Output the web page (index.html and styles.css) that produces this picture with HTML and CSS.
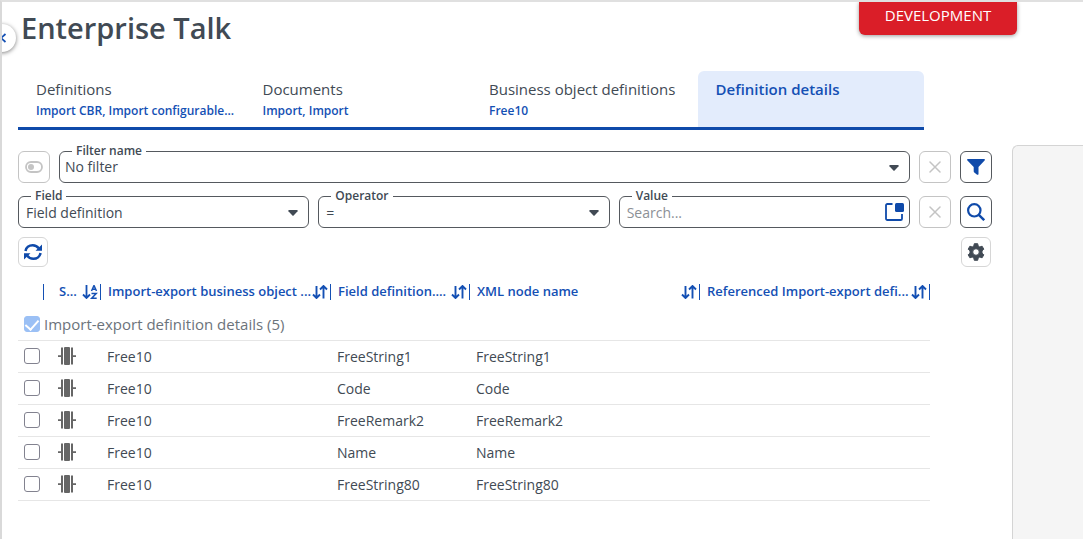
FILE: index.html
```html
<!DOCTYPE html>
<html lang="en">
<head>
  <meta charset="UTF-8" />
  <meta name="viewport" content="width=device-width, initial-scale=1.0"/>
  <title>Enterprise Talk</title>
  <link rel="stylesheet" href="styles.css">
</head>
<body>
  <!-- shared icons -->
  <svg class="sprite" aria-hidden="true">
    <symbol id="caret" viewBox="0 0 10 6"><path d="M1 0h8a.8.8 0 0 1 .6 1.300L5.600 5.600a.9.9 0 0 1-1.200 0L.4 1.300A.8.8 0 0 1 1 0z" fill="currentColor"/></symbol>
    <symbol id="cross" viewBox="0 0 12 12"><path d="M1 1l10 10M11 1L1 11" fill="none" stroke="currentColor" stroke-width="1.500" stroke-linecap="round"/></symbol>
    <symbol id="sort" viewBox="0 0 16 14"><path d="M4.500 1v11.500M1 9.500l3.500 3.500L8 9.500M11.500 13.500V1.500M8 4.500L11.500 1 15 4.500" fill="none" stroke="currentColor" stroke-width="1.900"/></symbol>
    <symbol id="node" viewBox="0 0 18 18"><rect x="6" y="0" width="6" height="18" rx="1" fill="#666"/><path d="M3 .5h2v17H3zM13 .5h2v17h-2zM0 8.300h3v1.600H0zM15 8.300h3v1.600h-3z" fill="#666"/></symbol>
  </svg>

  <button class="collapse" aria-label="Collapse menu">
    <svg width="8" height="10" viewBox="0 0 8 10"><path d="M6.500 1L2 5l4.500 4" fill="none" stroke="currentColor" stroke-width="1.800"/></svg>
  </button>
  <div class="env-badge">DEVELOPMENT</div>

  <header class="page-header">
    <h1>Enterprise Talk</h1>
  </header>

  <nav class="tabs">
    <a href="#" class="tab">Definitions<span>Import CBR, Import configurable...</span></a>
    <a href="#" class="tab">Documents<span>Import, Import</span></a>
    <a href="#" class="tab">Business object definitions<span>Free10</span></a>
    <a href="#" class="tab active">Definition details</a>
  </nav>

  <div class="content">
    <main class="list">
      <form class="filters">
        <div class="filter-row">
          <button type="button" class="icon-btn disabled" aria-label="Toggle filter">
            <svg width="18" height="12" viewBox="0 0 18 12"><rect x="1" y="1" width="16" height="10" rx="5" fill="none" stroke="currentColor" stroke-width="1.800"/><circle cx="6" cy="6" r="3" fill="currentColor"/></svg>
          </button>
          <div class="field compact">
            <label for="filterName">Filter name</label>
            <select id="filterName"><option>No filter</option></select>
            <svg class="caret" width="10" height="6"><use href="#caret"/></svg>
          </div>
          <button type="button" class="icon-btn disabled" aria-label="Clear filter"><svg width="12" height="12"><use href="#cross"/></svg></button>
          <button type="button" class="icon-btn" aria-label="Filter">
            <svg width="18" height="16" viewBox="0 0 18 16"><path d="M.8 0h16.400a.8.8 0 0 1 .6 1.300L11.500 8v7a.9.9 0 0 1-1.400.7L7.300 13.500a1.500 1.500 0 0 1-.6-1.200V8L.2 1.300A.8.8 0 0 1 .8 0z" fill="currentColor"/></svg>
          </button>
        </div>

        <div class="filter-row">
          <div class="field">
            <label for="fieldName">Field</label>
            <select id="fieldName"><option>Field definition</option></select>
            <svg class="caret" width="10" height="6"><use href="#caret"/></svg>
          </div>
          <div class="field">
            <label for="operator">Operator</label>
            <select id="operator"><option>=</option></select>
            <svg class="caret" width="10" height="6"><use href="#caret"/></svg>
          </div>
          <div class="field">
            <label for="value">Value</label>
            <input type="text" id="value" placeholder="Search...">
            <button type="button" class="lookup" aria-label="Open lookup">
              <svg width="19" height="19" viewBox="0 0 19 19"><path d="M7.500 2H2.300A1.300 1.300 0 0 0 1 3.300v13.400A1.300 1.300 0 0 0 2.300 18h13.400a1.300 1.300 0 0 0 1.300-1.300V12" fill="none" stroke="currentColor" stroke-width="1.800"/><rect x="10" y="1" width="9" height="9" rx="1.500" fill="currentColor"/></svg>
            </button>
          </div>
          <button type="button" class="icon-btn disabled" aria-label="Clear search"><svg width="12" height="12"><use href="#cross"/></svg></button>
          <button type="button" class="icon-btn" aria-label="Search">
            <svg width="18" height="18" viewBox="0 0 18 18"><circle cx="7.300" cy="7.300" r="6.200" fill="none" stroke="currentColor" stroke-width="2.200"/><path d="M11.800 11.800l5.400 5.400" stroke="currentColor" stroke-width="2.400"/></svg>
          </button>
        </div>
      </form>

      <div class="toolbar">
        <button class="icon-btn small" aria-label="Refresh">
          <svg width="18" height="18" viewBox="0 0 18 18"><path d="M1.500 8C2 4.500 5 2.200 8.700 2.200c2.500 0 4.700 1.200 6 3.200M16.500 10c-.5 3.500-3.500 5.800-7.200 5.800-2.500 0-4.700-1.200-6-3.200" fill="none" stroke="currentColor" stroke-width="2.500"/><path d="M18 1.500v6.200h-6.500zM0 16.500v-6.200h6.500z" fill="currentColor"/></svg>
        </button>
        <button class="icon-btn small dark" aria-label="Settings">
          <svg width="18" height="18" viewBox="0 0 18 18"><path fill-rule="evenodd" fill="currentColor" stroke="currentColor" stroke-linejoin="round" d="M7.300.7h3.400l.5 2.400 1.600.9 2.300-.8 1.700 3-1.800 1.600v2.400l1.800 1.600-1.700 3-2.300-.8-1.600.9-.5 2.400H7.300l-.5-2.400-1.600-.9-2.300.8-1.700-3L3 10.200V7.800L1.200 6.200l1.700-3 2.300.8 1.600-.9zM9 5.700a3.300 3.300 0 1 0 0 6.600 3.300 3.300 0 0 0 0-6.600z"/></svg>
        </button>
      </div>

      <table class="grid">
        <colgroup>
          <col class="col-check"><col class="col-status"><col class="col-wide"><col class="col-field"><col class="col-wide"><col>
        </colgroup>
        <thead>
          <tr>
            <th><div class="head"></div></th>
            <th><div class="head status"><span>S...</span>
              <svg width="16" height="14" viewBox="0 0 16 14"><path d="M4.500 0v12.500M1 9.500l3.500 3.500L8 9.500" fill="none" stroke="currentColor" stroke-width="1.800"/><path d="M9.500 6l2.500-5.500L14.500 6M10.500 4.300h3M9.500 8.500h4.700l-4.500 4.700h5" fill="none" stroke="currentColor" stroke-width="1.500"/></svg></div></th>
            <th><div class="head"><span>Import-export business object ...</span><svg width="16" height="14"><use href="#sort"/></svg></div></th>
            <th><div class="head"><span>Field definition....</span><svg width="16" height="14"><use href="#sort"/></svg></div></th>
            <th><div class="head"><span>XML node name</span><svg width="16" height="14"><use href="#sort"/></svg></div></th>
            <th><div class="head"><span>Referenced Import-export defi...</span><svg width="16" height="14"><use href="#sort"/></svg></div></th>
          </tr>
        </thead>
        <tbody>
          <tr class="group">
            <td colspan="6"><label><input type="checkbox" checked disabled>Import-export definition details (5)</label></td>
          </tr>
          <tr>
            <td><input type="checkbox" aria-label="Select FreeString1"></td>
            <td class="icon"><svg width="18" height="18"><use href="#node"/></svg></td>
            <td>Free10</td><td>FreeString1</td><td>FreeString1</td><td></td>
          </tr>
          <tr>
            <td><input type="checkbox" aria-label="Select Code"></td>
            <td class="icon"><svg width="18" height="18"><use href="#node"/></svg></td>
            <td>Free10</td><td>Code</td><td>Code</td><td></td>
          </tr>
          <tr>
            <td><input type="checkbox" aria-label="Select FreeRemark2"></td>
            <td class="icon"><svg width="18" height="18"><use href="#node"/></svg></td>
            <td>Free10</td><td>FreeRemark2</td><td>FreeRemark2</td><td></td>
          </tr>
          <tr>
            <td><input type="checkbox" aria-label="Select Name"></td>
            <td class="icon"><svg width="18" height="18"><use href="#node"/></svg></td>
            <td>Free10</td><td>Name</td><td>Name</td><td></td>
          </tr>
          <tr>
            <td><input type="checkbox" aria-label="Select FreeString80"></td>
            <td class="icon"><svg width="18" height="18"><use href="#node"/></svg></td>
            <td>Free10</td><td>FreeString80</td><td>FreeString80</td><td></td>
          </tr>
        </tbody>
      </table>
    </main>
    <aside class="side-panel"></aside>
  </div>
</body>
</html>
```
FILE: styles.css
```css
* {
  box-sizing: border-box;
}
body {
  margin: 0;
  min-height: 100vh;
  display: flex;
  flex-direction: column;
  position: relative;
  overflow-x: hidden;
  border-top: 2px solid #e0e0e0;
  border-left: 2px solid #d9d9d9;
  background: #fff;
  color: #414a54;
  font-family: "Open Sans", sans-serif;
  font-size: 14px;
}
button, input, select {
  font: inherit;
  color: inherit;
}
svg {
  display: block;
  flex: none;
}
.sprite {
  position: absolute;
  width: 0;
  height: 0;
}
.collapse {
  position: absolute;
  top: 22px;
  left: -14px;
  width: 28px;
  height: 28px;
  padding: 0 0 0 11px;
  border: none;
  border-radius: 50%;
  background: #fff;
  color: #1450b4;
  box-shadow: 0 1px 4px rgba(0, 0, 0, 0.5);
}
.env-badge {
  position: absolute;
  top: 0;
  right: 66px;
  width: 158px;
  padding: 3px 0 10px;
  border-radius: 0 0 6px 6px;
  background: #da1e28;
  color: #fff;
  font-size: 15px;
  line-height: 20px;
  text-align: center;
  box-shadow: 0 1px 4px rgba(0, 0, 0, 0.4);
}
.page-header {
  padding: 6px 19px 23px;
}
h1 {
  margin: 0;
  font-size: 29px;
  line-height: 40px;
  font-weight: 600;
}

/* tabs */
.tabs {
  display: grid;
  grid-template-columns: repeat(4, minmax(0, 1fr));
  margin: 0 159px 0 16px;
  border-bottom: 3px solid #0f4aaa;
}
.tab {
  height: 56px;
  padding: 7px 18px;
  border-radius: 6px 6px 0 0;
  color: #414a54;
  font-size: 15px;
  line-height: 22px;
  text-decoration: none;
  white-space: nowrap;
}
.tab span {
  display: block;
  color: #1450b4;
  font-size: 12px;
  line-height: 22px;
  font-weight: 600;
}
.tab.active {
  background: #e3ecfc;
  color: #1450b4;
  font-weight: 600;
}

.content {
  flex: 1;
  display: flex;
  gap: 20px;
  padding: 15px 0 0 16px;
}
.list {
  flex: 1;
  min-width: 0;
}
.side-panel {
  width: 71px;
  border: 1px solid #d4d4d4;
  border-width: 1px 0 0 1px;
  border-radius: 6px 0 0 0;
  background: #f5f5f5;
}

/* filters */
.filters {
  display: grid;
  gap: 13px;
  padding-top: 6px;
}
.filter-row {
  display: flex;
  gap: 9px;
}
.field {
  flex: 1;
  position: relative;
  height: 32px;
}
.field label {
  position: absolute;
  top: -8px;
  left: 13px;
  padding: 0 4px;
  background: #fff;
  font-size: 12px;
  line-height: 16px;
  font-weight: 600;
}
.field select, .field input {
  display: block;
  width: 100%;
  height: 100%;
  margin: 0;
  padding: 0 7px;
  border: 1px solid #55595e;
  border-radius: 6px;
  background: #fff;
  appearance: none;
}
.field.compact select {
  padding: 0 5px 2px;
}
.field input::placeholder {
  color: #8c9096;
}
.caret {
  position: absolute;
  top: 14px;
  right: 11px;
}
.lookup {
  position: absolute;
  top: 6px;
  right: 6px;
  padding: 0;
  border: none;
  background: none;
  color: #0f4aaa;
}
.icon-btn {
  display: flex;
  flex: none;
  align-items: center;
  justify-content: center;
  width: 32px;
  height: 32px;
  padding: 0;
  border: 1px solid #55595e;
  border-radius: 6px;
  background: #fff;
  color: #0f4aaa;
}
.icon-btn.disabled {
  border-color: #c4c4c4;
  color: #c4c4c4;
}
.icon-btn.small {
  width: 30px;
  height: 30px;
  border-color: #d6d6d6;
}
.icon-btn.dark {
  color: #414a54;
}
.toolbar {
  display: flex;
  justify-content: space-between;
  padding: 9px 1px 9px 0;
}

/* table */
.grid {
  width: calc(100% - 62px);
  table-layout: fixed;
  border-collapse: collapse;
}
.col-check {
  width: 26px;
}
.col-status {
  width: 57px;
}
.col-wide {
  width: 230px;
}
.col-field {
  width: 139px;
}
th {
  height: 32px;
  padding: 0;
  color: #1450b4;
  font-size: 13px;
  font-weight: 600;
  text-align: left;
}
.head {
  display: flex;
  align-items: center;
  justify-content: space-between;
  height: 16px;
  padding: 0 2px 0 7px;
  border-right: 1px solid #1450b4;
  white-space: nowrap;
}
.head.status {
  padding-left: 15px;
}
.head span {
  line-height: 16px;
  padding-bottom: 2px;
}
td {
  height: 32px;
  padding: 0 6px;
  border-bottom: 1px solid #e6e6e6;
}
td.icon {
  padding-left: 14px;
}
td label {
  display: flex;
  align-items: center;
  gap: 4px;
  color: #6c737b;
  font-size: 15px;
}
td input {
  appearance: none;
  display: block;
  width: 16px;
  height: 16px;
  margin: 0;
  border: 1px solid #82828f;
  border-radius: 3px;
  background: #fff;
}
td input:checked {
  border-color: #9bc0f5;
  background: #9bc0f5;
}
/* tick */
td input:checked::after {
  content: "";
  display: block;
  width: 6px;
  height: 11px;
  margin: 0 auto;
  border: solid #fff;
  border-width: 0 2px 2px 0;
  transform: rotate(42deg);
}
```
